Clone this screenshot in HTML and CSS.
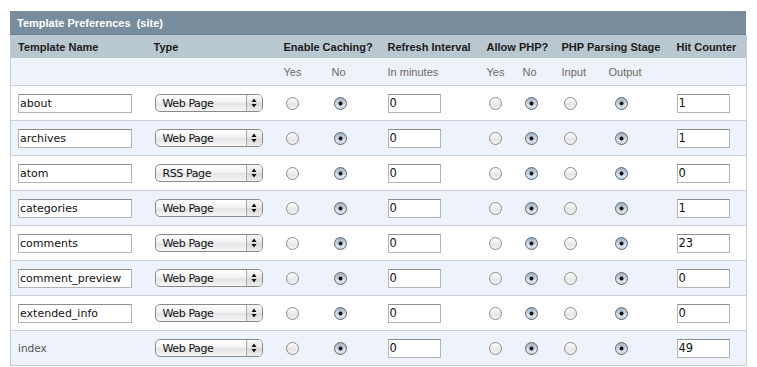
FILE: index.html
```html
<!DOCTYPE html>
<html lang="en">
<head>
  <meta charset="UTF-8">
  <title>Template Preferences</title>
  <link rel="stylesheet" href="styles.css">
</head>
<body>
  <div class="panel">
    <!-- Title bar -->
    <div class="title">Template Preferences &nbsp;(site)</div>

    <table class="prefs">
      <colgroup>
        <col style="width:136px"><col style="width:130px">
        <col style="width:48px"><col style="width:56px">
        <col style="width:99px">
        <col style="width:36px"><col style="width:39px">
        <col style="width:47px"><col style="width:68px">
        <col style="width:77px">
      </colgroup>
      <thead>
        <tr class="head">
          <th>Template Name</th>
          <th>Type</th>
          <th colspan="2">Enable Caching?</th>
          <th>Refresh Interval</th>
          <th colspan="2">Allow PHP?</th>
          <th colspan="2">PHP Parsing Stage</th>
          <th>Hit Counter</th>
        </tr>
        <tr class="sub">
          <td></td>
          <td></td>
          <td>Yes</td>
          <td>No</td>
          <td>In minutes</td>
          <td>Yes</td>
          <td>No</td>
          <td>Input</td>
          <td>Output</td>
          <td></td>
        </tr>
      </thead>
      <tbody>
        <tr>
          <td><input class="name" type="text" value="about"></td>
          <td><button class="popup" type="button"><span class="label">Web Page</span><span class="arrows"><svg width="8" height="12" viewBox="0 0 8 12"><path d="M1.5 5 L4 1.5 L6.5 5 Z M1.5 7 L4 10.5 L6.5 7 Z" fill="#111"/></svg></span></button></td>
          <td><input type="radio" name="c1"></td>
          <td><input type="radio" name="c1" checked></td>
          <td><input class="small" type="text" value="0"></td>
          <td><input type="radio" name="p1"></td>
          <td><input type="radio" name="p1" checked></td>
          <td><input type="radio" name="s1"></td>
          <td class="out"><input type="radio" name="s1" checked></td>
          <td><input class="small" type="text" value="1"></td>
        </tr>
        <tr>
          <td><input class="name" type="text" value="archives"></td>
          <td><button class="popup" type="button"><span class="label">Web Page</span><span class="arrows"><svg width="8" height="12" viewBox="0 0 8 12"><path d="M1.5 5 L4 1.5 L6.5 5 Z M1.5 7 L4 10.5 L6.5 7 Z" fill="#111"/></svg></span></button></td>
          <td><input type="radio" name="c2"></td>
          <td><input type="radio" name="c2" checked></td>
          <td><input class="small" type="text" value="0"></td>
          <td><input type="radio" name="p2"></td>
          <td><input type="radio" name="p2" checked></td>
          <td><input type="radio" name="s2"></td>
          <td class="out"><input type="radio" name="s2" checked></td>
          <td><input class="small" type="text" value="1"></td>
        </tr>
        <tr>
          <td><input class="name" type="text" value="atom"></td>
          <td><button class="popup" type="button"><span class="label">RSS Page</span><span class="arrows"><svg width="8" height="12" viewBox="0 0 8 12"><path d="M1.5 5 L4 1.5 L6.5 5 Z M1.5 7 L4 10.5 L6.5 7 Z" fill="#111"/></svg></span></button></td>
          <td><input type="radio" name="c3"></td>
          <td><input type="radio" name="c3" checked></td>
          <td><input class="small" type="text" value="0"></td>
          <td><input type="radio" name="p3"></td>
          <td><input type="radio" name="p3" checked></td>
          <td><input type="radio" name="s3"></td>
          <td class="out"><input type="radio" name="s3" checked></td>
          <td><input class="small" type="text" value="0"></td>
        </tr>
        <tr>
          <td><input class="name" type="text" value="categories"></td>
          <td><button class="popup" type="button"><span class="label">Web Page</span><span class="arrows"><svg width="8" height="12" viewBox="0 0 8 12"><path d="M1.5 5 L4 1.5 L6.5 5 Z M1.5 7 L4 10.5 L6.5 7 Z" fill="#111"/></svg></span></button></td>
          <td><input type="radio" name="c4"></td>
          <td><input type="radio" name="c4" checked></td>
          <td><input class="small" type="text" value="0"></td>
          <td><input type="radio" name="p4"></td>
          <td><input type="radio" name="p4" checked></td>
          <td><input type="radio" name="s4"></td>
          <td class="out"><input type="radio" name="s4" checked></td>
          <td><input class="small" type="text" value="1"></td>
        </tr>
        <tr>
          <td><input class="name" type="text" value="comments"></td>
          <td><button class="popup" type="button"><span class="label">Web Page</span><span class="arrows"><svg width="8" height="12" viewBox="0 0 8 12"><path d="M1.5 5 L4 1.5 L6.5 5 Z M1.5 7 L4 10.5 L6.5 7 Z" fill="#111"/></svg></span></button></td>
          <td><input type="radio" name="c5"></td>
          <td><input type="radio" name="c5" checked></td>
          <td><input class="small" type="text" value="0"></td>
          <td><input type="radio" name="p5"></td>
          <td><input type="radio" name="p5" checked></td>
          <td><input type="radio" name="s5"></td>
          <td class="out"><input type="radio" name="s5" checked></td>
          <td><input class="small" type="text" value="23"></td>
        </tr>
        <tr>
          <td><input class="name" type="text" value="comment_preview"></td>
          <td><button class="popup" type="button"><span class="label">Web Page</span><span class="arrows"><svg width="8" height="12" viewBox="0 0 8 12"><path d="M1.5 5 L4 1.5 L6.5 5 Z M1.5 7 L4 10.5 L6.5 7 Z" fill="#111"/></svg></span></button></td>
          <td><input type="radio" name="c6"></td>
          <td><input type="radio" name="c6" checked></td>
          <td><input class="small" type="text" value="0"></td>
          <td><input type="radio" name="p6"></td>
          <td><input type="radio" name="p6" checked></td>
          <td><input type="radio" name="s6"></td>
          <td class="out"><input type="radio" name="s6" checked></td>
          <td><input class="small" type="text" value="0"></td>
        </tr>
        <tr>
          <td><input class="name" type="text" value="extended_info"></td>
          <td><button class="popup" type="button"><span class="label">Web Page</span><span class="arrows"><svg width="8" height="12" viewBox="0 0 8 12"><path d="M1.5 5 L4 1.5 L6.5 5 Z M1.5 7 L4 10.5 L6.5 7 Z" fill="#111"/></svg></span></button></td>
          <td><input type="radio" name="c7"></td>
          <td><input type="radio" name="c7" checked></td>
          <td><input class="small" type="text" value="0"></td>
          <td><input type="radio" name="p7"></td>
          <td><input type="radio" name="p7" checked></td>
          <td><input type="radio" name="s7"></td>
          <td class="out"><input type="radio" name="s7" checked></td>
          <td><input class="small" type="text" value="0"></td>
        </tr>
        <tr>
          <td class="fixed">index</td>
          <td><button class="popup" type="button"><span class="label">Web Page</span><span class="arrows"><svg width="8" height="12" viewBox="0 0 8 12"><path d="M1.5 5 L4 1.5 L6.5 5 Z M1.5 7 L4 10.5 L6.5 7 Z" fill="#111"/></svg></span></button></td>
          <td><input type="radio" name="c8"></td>
          <td><input type="radio" name="c8" checked></td>
          <td><input class="small" type="text" value="0"></td>
          <td><input type="radio" name="p8"></td>
          <td><input type="radio" name="p8" checked></td>
          <td><input type="radio" name="s8"></td>
          <td class="out"><input type="radio" name="s8" checked></td>
          <td><input class="small" type="text" value="49"></td>
        </tr>
      </tbody>
    </table>
  </div>
</body>
</html>
```

FILE: styles.css
```css
/* Global */
body {
  margin: 0;
  padding: 11px 11px 0 10px;
  background: #fff;
  font-family: 'Liberation Sans', Arial, sans-serif;
  font-size: 11px;
  color: #222;
}

.panel {
  width: 736px;
}

/* Title bar */
.title {
  height: 23px;
  line-height: 24px;
  padding-left: 7px;
  background-color: #778c9c;
  border-bottom: 1px solid #687d8d;
  color: #fff;
  font-weight: bold;
  white-space: pre;
}

/* Table */
.prefs {
  width: 736px;
  table-layout: fixed;
  border-collapse: collapse;
  border-left: 1px solid #c6cbe2;
  border-right: 1px solid #c6cbe2;
}

.prefs th,
.prefs td {
  padding: 0 0 0 7px;
  text-align: left;
  vertical-align: middle;
  white-space: nowrap;
}

.head th {
  height: 23px;
  background-color: #b9c7d0;
  font-weight: bold;
  color: #1c1c1c;
}

.sub td {
  height: 27px;
  background-color: #eef2fa;
  border-bottom: 1px solid #c9cfe0;
  color: #6a6a6a;
}

tbody td {
  height: 34px;
  border-bottom: 1px solid #c9cfe0;
}

tbody tr:nth-child(even) td {
  background-color: #eef2fa;
}

td.fixed {
  font-family: 'DejaVu Sans', sans-serif;
  font-size: 10.5px;
  color: #555;
}

td.out {
  padding-left: 11px;
}

/* Text fields */
input[type="text"] {
  box-sizing: border-box;
  height: 19px;
  margin: 0;
  padding: 0 1px;
  border: 1px solid #b4b4b4;
  border-top-color: #8e8e8e;
  background: #fff;
  font-family: 'DejaVu Sans', sans-serif;
  font-size: 11.5px;
  color: #111;
  vertical-align: middle;
}

input.name {
  width: 114px;
  font-size: 11px;
}

input.small {
  width: 53px;
}

/* Popup menus */
.popup {
  display: flex;
  align-items: stretch;
  box-sizing: border-box;
  width: 108px;
  height: 18px;
  margin: 0 0 0 1px;
  padding: 0;
  border: 1px solid #8a8a8a;
  border-radius: 5px;
  overflow: hidden;
  background: linear-gradient(#ffffff, #f3f3f3 45%, #e4e4e4 55%, #f6f6f6);
  font-family: 'DejaVu Sans', sans-serif;
  font-size: 11px;
  letter-spacing: -0.4px;
  color: #111;
}

.popup .label {
  flex: 1;
  padding: 1px 0 0 7px;
  line-height: 16px;
  text-align: left;
}

.popup .arrows {
  display: flex;
  align-items: center;
  justify-content: center;
  width: 15px;
  border-left: 1px solid #a8a8a8;
  background: linear-gradient(#f8f8f8, #e6e6e6 50%, #d8d8d8 52%, #eeeeee);
}

/* Radio buttons */
input[type="radio"] {
  -webkit-appearance: none;
  appearance: none;
  box-sizing: border-box;
  width: 13px;
  height: 13px;
  margin: 0 0 0 2px;
  border: 1px solid #8d8d8d;
  border-radius: 50%;
  background: linear-gradient(#ffffff, #e6e6e6 60%, #f4f4f4);
  vertical-align: middle;
}

input[type="radio"]:checked {
  border-color: #5e6b78;
  background:
    radial-gradient(circle, #111 0, #111 1.6px, transparent 2.4px),
    linear-gradient(#9fb0c3, #dde5ee 70%, #c6d2df);
}
```
